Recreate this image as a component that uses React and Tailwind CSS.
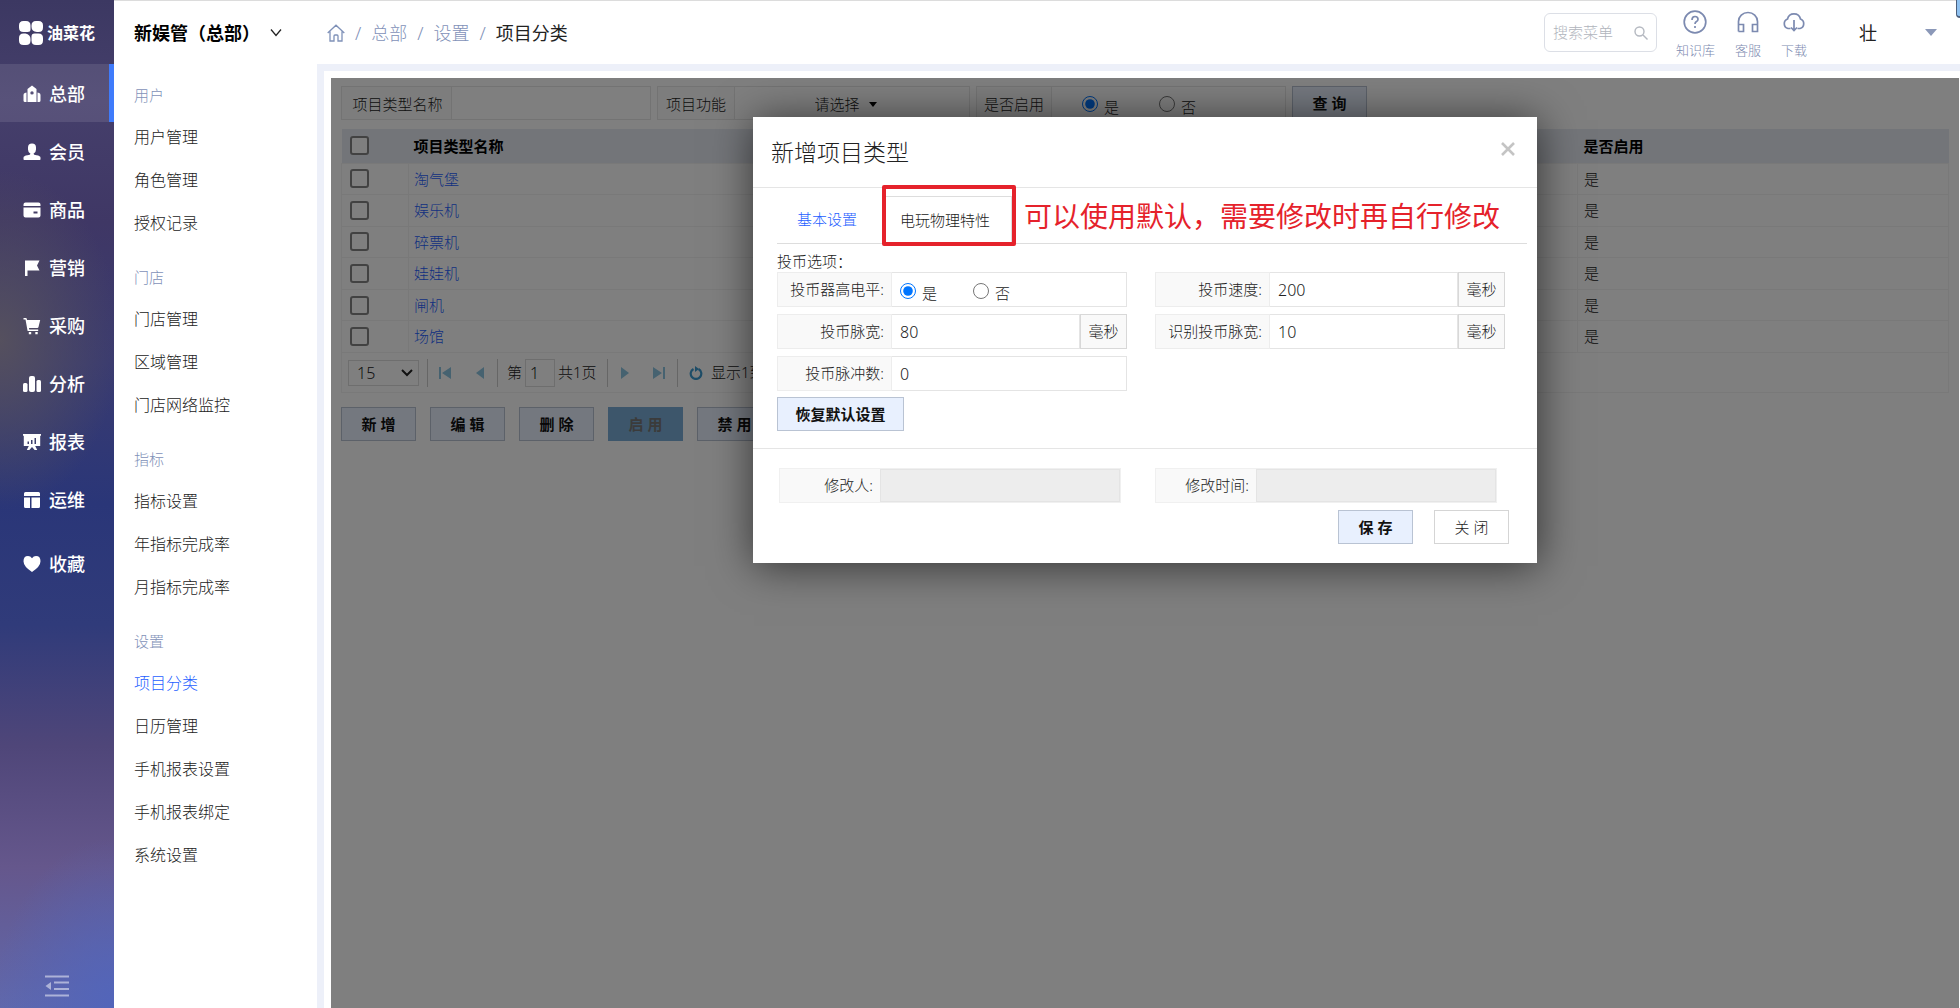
import React, { useState } from 'react';

const mainNav = [
  { name: '总部', icon: 'home' },
  { name: '会员', icon: 'user' },
  { name: '商品', icon: 'card' },
  { name: '营销', icon: 'flag' },
  { name: '采购', icon: 'cart' },
  { name: '分析', icon: 'bars' },
  { name: '报表', icon: 'board' },
  { name: '运维', icon: 'layout' },
];

const groups = [
  { title: '用户', items: ['用户管理', '角色管理', '授权记录'] },
  { title: '门店', items: ['门店管理', '区域管理', '门店网络监控'] },
  { title: '指标', items: ['指标设置', '年指标完成率', '月指标完成率'] },
  { title: '设置', items: ['项目分类', '日历管理', '手机报表设置', '手机报表绑定', '系统设置'] },
];

const rows = ['淘气堡', '娱乐机', '碎票机', '娃娃机', '闸机', '场馆'];

const NavIcon = ({ name }) => (
  <svg viewBox="0 0 18 18" fill="currentColor" className="h-[18px] w-[18px] shrink-0">
    {name === 'home' && (
      <path fillRule="evenodd" d="M9 .5 4.500 4v13h9V4L9 .5ZM9 6.200a1.700 1.700 0 1 1 0 3.400 1.700 1.700 0 0 1 0-3.400ZM3.500 7.500 1.800 8Q.5 8.500.5 10v5.500Q.5 17 2 17h1.500V7.500Zm11 0 1.700.5q1.300.5 1.300 2v5.500q0 1.500-1.500 1.500h-1.500V7.500Z" />
    )}
    {name === 'user' && (
      <path d="M5 4.500Q5 .5 9 .5t4 4v2q0 3-2.500 4.200 0 1 3 1.500 4 .5 4 2.500v1.500q0 .8-.8.8H1.300q-.8 0-.8-.8v-1.500q0-2 4-2.500 3-.5 3-1.500Q5 9.500 5 6.500v-2Z" />
    )}
    {name === 'card' && (
      <path fillRule="evenodd" d="M2.500 1.500h13q2 0 2 2V5H.5V3.500q0-2 2-2ZM.5 6.500h17v8q0 2-2 2h-13q-2 0-2-2v-8Zm10 4v2h4v-2h-4Z" />
    )}
    {name === 'flag' && <path d="M2 1.500h14.500L14 6.500l2.500 5H4.500V17H2V1.500Z" />}
    {name === 'cart' && (
      <path d="M.5 1h2.300q.8 0 1 .8L4 3h13.200L15.500 10q-.2 1-1.200 1H6l.2 1.500h9V14H5.200q-.6 0-.7-.6L2.500 2.500h-2V1Zm5.300 14h2.400v2.300H5.800V15Zm6.500 0h2.400v2.300h-2.400V15Z" />
    )}
    {name === 'bars' && (
      <>
        <rect x="0" y="8" width="4.500" height="9" rx="1.500" />
        <rect x="6" y="1" width="6" height="16" rx="2" />
        <rect x="13.500" y="5" width="4.500" height="12" rx="1.500" />
      </>
    )}
    {name === 'board' && (
      <path fillRule="evenodd" d="M0 1h18v1.800h-.8V13h-5l2 4h-2.500L9 14l-2.700 3H3.800l2-4h-5V2.800H0V1Zm4.500 7.500V11H6V8.500H4.500ZM8 7v4h1.500V7H8Zm3.500-2v6H13V5h-1.500Z" />
    )}
    {name === 'layout' && (
      <path d="M2.500 1h13q1.500 0 1.500 1.500V5H1V2.500Q1 1 2.500 1ZM1 6.500h6V17H2.500Q1 17 1 15.500v-9Zm7.500 0H17v9q0 1.500-1.500 1.500h-7V6.500Z" />
    )}
    {name === 'heart' && (
      <path d="M9 17Q.5 11.500.5 6.300.5 1 5 1q2.500 0 4 2.300Q10.500 1 13 1q4.500 0 4.500 5.300Q17.500 11.500 9 17Z" />
    )}
  </svg>
);

const Logo = () => (
  <div className="flex h-16 items-center gap-1 pl-[19px] pt-[2px]">
    <svg viewBox="0 0 24 24" fill="#fff" className="h-6 w-6">
      <path d="M4.500 0H7q4.500 0 4.500 4.500v4q0 2.500-3 2.500h-4Q0 11 0 6.500v-2Q0 0 4.500 0ZM17 0h2.500Q24 0 24 4.500v2q0 4.500-4.500 4.500H18q-5.500-.5-5.500-5V4.500Q12.500 0 17 0ZM4.500 12.500h2q5 1 5 5.500v1.500q0 4.500-4.500 4.500H4.500Q0 24 0 19.500V17q0-4.500 4.500-4.500ZM15.500 12.500h4Q24 12.500 24 17v2.500q0 4.500-4.500 4.500H17q-4.500 0-4.500-4.500v-4q0-3 3-3Z" />
    </svg>
    <span className="text-base font-bold text-white">油菜花</span>
  </div>
);

const Sidebar = () => (
  <aside className="flex w-[114px] shrink-0 flex-col bg-[radial-gradient(120px_170px_at_100%_100%,#5265ba_0%,transparent_100%),radial-gradient(120px_170px_at_0px_340px,#55505e_0%,transparent_100%),linear-gradient(to_bottom,#3c3862_0%,#453f6b_10%,#3f3765_22%,#3a3b70_36%,#2a3678_50%,#303b7a_62%,#4f4679_74%,#65578c_86%,#6068ac_100%)] text-white">
    <Logo />
    <nav className="flex flex-col">
      {mainNav.map((item, i) => (
        <a
          key={item.name}
          href="#"
          className={`flex h-[58px] items-center gap-2 pl-[23px] pt-[2px] text-lg font-medium ${
            i === 0 ? 'border-r-[5px] border-[#3f7bfb] bg-white/10' : ''
          }`}
        >
          <NavIcon name={item.icon} />
          {item.name}
        </a>
      ))}
      <a href="#" className="mt-[6px] flex h-[58px] items-center gap-2 pl-[23px] pt-[2px] text-lg font-medium">
        <NavIcon name="heart" />
        收藏
      </a>
    </nav>
    <button aria-label="收起" className="mb-[11px] mt-auto self-center">
      <svg viewBox="0 0 24 22" className="h-[22px] w-6 text-white/50" stroke="currentColor" strokeWidth="2" fill="currentColor">
        <path d="M0 1.500h24M9 7.500h15M9 14h15M0 20.500h24" />
        <path stroke="none" d="M6 7v8l-5.500-4L6 7Z" />
      </svg>
    </button>
  </aside>
);

const SubMenu = () => (
  <nav className="w-[203px] shrink-0 pt-3">
    {groups.map((g) => (
      <div key={g.title} className="mb-[14px] pl-5">
        <h2 className="flex h-[39px] items-center text-[15px] text-[#7f91b8]">{g.title}</h2>
        {g.items.map((item) => (
          <a
            key={item}
            href="#"
            className={`flex h-[43px] items-center text-base ${
              item === '项目分类' ? 'text-[#1f5fff]' : 'text-[#222]'
            }`}
          >
            {item}
          </a>
        ))}
      </div>
    ))}
  </nav>
);

const HeaderLink = ({ label, children }) => (
  <a href="#" className="flex flex-col items-center gap-[6px] pt-[5px] text-[13px] leading-5 text-[#7c8ab0]">
    <svg viewBox="0 0 24 24" fill="none" stroke="currentColor" strokeWidth="1.700" className="h-6 w-6">
      {children}
    </svg>
    {label}
  </a>
);

const Header = () => (
  <header className="flex h-16 items-center border-t border-[#dcdcdc] pl-5 text-lg">
    <button className="flex w-[193px] items-center font-bold text-black">
      新娱管（总部）
      <svg viewBox="0 0 12 10" className="ml-[10px] h-[10px] w-3" fill="none" stroke="#222" strokeWidth="1.300">
        <path d="m1 1.500 5 6 5-6" />
      </svg>
    </button>
    <div className="flex items-center gap-[10px] text-[#7f91b8]">
      <svg viewBox="0 0 18 18" className="h-[18px] w-[18px]" fill="none" stroke="currentColor" strokeWidth="1.300">
        <path d="M.7 9 9 1.200 17.300 9M3 7.500V17h4v-5q0-1 1-1h2q1 0 1 1v5h4V7.500" />
      </svg>
      <span>/</span>
      <a href="#">总部</a>
      <span>/</span>
      <a href="#">设置</a>
      <span>/</span>
      <span className="font-normal text-[#222]">项目分类</span>
    </div>
    <div className="ml-auto flex items-center">
      <label className="flex h-[39px] w-[113px] items-center rounded-md border border-[#dcdfe6] pl-2 pr-2">
        <input
          aria-label="搜索菜单"
          placeholder="搜索菜单"
          className="w-0 flex-1 text-[15px] outline-none placeholder:text-[#b0b4bc]"
        />
        <svg viewBox="0 0 14 14" className="h-[14px] w-[14px]" fill="none" stroke="#b4b8c0" strokeWidth="1.400">
          <circle cx="5.500" cy="5.500" r="4.500" />
          <path d="m9 9 4.500 4.500" />
        </svg>
      </label>
      <div className="ml-[19px] flex gap-5">
        <HeaderLink label="知识库">
          <circle cx="12" cy="12" r="10.800" />
          <path d="M9 10q0-3.500 3-3.500t3 2.700q0 1.500-1.500 2.300-1.500.8-1.500 2.500" />
          <path d="M12 16v2" />
        </HeaderLink>
        <HeaderLink label="客服">
          <path d="M2.500 21.500v-10a9.500 9 0 0 1 19 0v10h-5v-7h5M2.500 14.500h5v7h-5" />
        </HeaderLink>
        <HeaderLink label="下载">
          <path d="M8.500 18.500H6A5 5 0 0 1 5.500 9 6.700 6.700 0 0 1 18.500 9a5 5 0 0 1-.5 9.500h-2.500" />
          <path d="M12 10v10.500M9 17.500l3 3 3-3" />
        </HeaderLink>
      </div>
      <button className="ml-[52px] flex items-center gap-12 pr-[23px] font-normal text-[#222]">
        壮
        <svg viewBox="0 0 12 7" className="h-[7px] w-3" fill="#8b98b8">
          <path d="M0 0h12L6 7Z" />
        </svg>
      </button>
    </div>
  </header>
);

const ActionButton = ({ children, className = 'w-[75px]' }) => (
  <button
    className={`h-[34px] shrink-0 border border-[#b9c3d3] bg-[#e8f0fe] text-[15px] font-bold text-[#111] ${className}`}
  >
    {children}
  </button>
);

const YesNo = ({ name, value, onChange, className }) => (
  <div className={`flex items-center ${className}`}>
    {['是', '否'].map((v) => (
      <label key={v} className="flex items-center gap-[6px]">
        <input
          type="radio"
          name={name}
          checked={value === v}
          onChange={() => onChange(v)}
          className="h-4 w-4 accent-[#0075ff]"
        />
        <span className="pt-[6px]">{v}</span>
      </label>
    ))}
  </div>
);

const FilterBar = () => {
  const [enabled, setEnabled] = useState('是');
  const cell = 'flex items-center border border-[#e6e6e6] bg-[#fafafa] pt-[2px]';
  return (
    <div className="flex h-[34px] gap-[6px] text-[15px] text-[#222]">
      <label className="flex w-[310px]">
        <span className={`w-[111px] justify-center pl-[2px] ${cell}`}>项目类型名称</span>
        <input className="w-0 flex-1 border border-l-0 border-[#e6e6e6] bg-white" />
      </label>
      <label className="flex w-[313px]">
        <span className={`w-[78px] justify-center ${cell}`}>项目功能</span>
        <span className="flex flex-1 items-center justify-center gap-2 border border-l-0 border-[#e6e6e6] pr-[13px] pt-[2px]">
          <select className="appearance-none bg-transparent">
            <option>请选择</option>
          </select>
          <svg viewBox="0 0 10 6" className="h-[5px] w-2">
            <path d="M0 0h10L5 6Z" />
          </svg>
        </span>
      </label>
      <div className="flex w-[310px]">
        <span className={`w-[76px] justify-center ${cell}`}>是否启用</span>
        <YesNo
          name="filter"
          value={enabled}
          onChange={setEnabled}
          className="flex-1 gap-10 border border-l-0 border-[#e6e6e6] pl-[30px] pt-[2px]"
        />
      </div>
      <ActionButton>查 询</ActionButton>
    </div>
  );
};

const Check = ({ label }) => (
  <input
    type="checkbox"
    aria-label={label}
    className="block h-[19px] w-[19px] appearance-none rounded-[3px] border-2 border-[#858585] bg-white"
  />
);

const DataTable = () => (
  <table className="mt-[9px] h-[224px] w-full table-fixed border-collapse text-left text-[15px] text-[#222]">
    <thead>
      <tr className="h-[34px] bg-[#e6ebf3] text-black">
        <th className="w-[67px] pl-2">
          <Check label="全选" />
        </th>
        <th className="pl-[5px]">项目类型名称</th>
        <th className="w-[371px] pl-[6px]">是否启用</th>
      </tr>
    </thead>
    <tbody>
      {rows.map((name) => (
        <tr key={name}>
          <td className="border border-[#f2f2f2] p-0 pl-2">
            <Check label={name} />
          </td>
          <td className="border border-[#f2f2f2] p-0 pl-[5px]">
            <a href="#" className="text-[#1f5fff]">{name}</a>
          </td>
          <td className="border border-[#f2f2f2] p-0 pl-[6px]">是</td>
        </tr>
      ))}
    </tbody>
  </table>
);

const PageButton = ({ label, d }) => (
  <button aria-label={label} className="flex h-7 w-[34px] items-center justify-center">
    <svg viewBox="0 0 12 12" className="h-3 w-3" fill="#8cc4e0">
      <path d={d} />
    </svg>
  </button>
);

const Pager = () => (
  <div className="flex h-10 items-center border border-t-0 border-[#f2f2f2] pl-[6px] text-[15px] text-[#222]">
    <div className="relative">
      <select aria-label="每页条数" className="h-[26px] w-[71px] appearance-none border border-[#ddd] bg-white pl-2 text-base">
        <option>15</option>
      </select>
      <svg viewBox="0 0 12 8" className="absolute right-[6px] top-[9px] h-2 w-3" fill="none" stroke="#222" strokeWidth="2">
        <path d="m1 1 5 5 5-5" />
      </svg>
    </div>
    <div className="ml-2 flex h-7 w-[71px] border-x border-[#ccc]">
      <PageButton label="首页" d="M0 0h2v12H0ZM12 0v12L3 6Z" />
      <PageButton label="上一页" d="M11 0v12L3 6Z" />
    </div>
    <label className="flex h-7 w-[109px] items-center pl-[9px]">
      第
      <input defaultValue="1" className="mx-[3px] h-7 w-[30px] border border-[#ddd] bg-white pl-1 text-base" />
      共1页
    </label>
    <div className="flex h-7 w-[71px] border-x border-[#ccc]">
      <PageButton label="下一页" d="M2 0v12l8-6Z" />
      <PageButton label="末页" d="M0 0v12l9-6ZM10 0h2v12h-2Z" />
    </div>
    <button aria-label="刷新" className="ml-[11px] mr-2">
      <svg viewBox="0 0 14 14" className="h-[14px] w-[14px]" fill="none" stroke="#3c9bd0" strokeWidth="2.200">
        <path d="M4.500 3A5.300 5.300 0 1 0 9.500 3" />
        <path d="M6 0v6l4-3Z" fill="#3c9bd0" stroke="none" />
      </svg>
    </button>
    显示1到
  </div>
);

const Field = ({ label, value, unit }) => (
  <label className="flex h-[35px]">
    <span className="flex w-[115px] items-center justify-end border border-[#ededed] bg-[#f9f9f9] pr-[7px]">{label}</span>
    <input defaultValue={value} className="w-0 flex-1 border border-l-0 border-[#e4e4e4] pl-2 text-base" />
    {unit && (
      <span className="flex w-[47px] items-center justify-center border border-[#d8d8d8] bg-[#f9f9f9]">{unit}</span>
    )}
  </label>
);

const ReadOnly = ({ label }) => (
  <label className="flex h-[35px] w-[342px] border border-[#f0f0f0] bg-[#f9f9f9]">
    <span className="flex w-[100px] items-center justify-end pr-[7px]">{label}</span>
    <input disabled className="w-0 flex-1 border border-[#e4e4e4] bg-[#ededed]" />
  </label>
);

const Modal = () => {
  const [level, setLevel] = useState('是');
  return (
    <section
      role="dialog"
      aria-label="新增项目类型"
      className="absolute left-1/2 top-[39px] w-[784px] -translate-x-1/2 bg-white text-[15px] text-[#222] shadow-[1px_3px_40px_rgba(0,0,0,0.6)]"
    >
      <div className="flex h-[71px] items-center justify-between border-b border-[#e5e5e5] pl-[18px] pr-[22px]">
        <h1 className="text-[23px]">新增项目类型</h1>
        <button aria-label="关闭窗口" className="mb-[6px]">
          <svg viewBox="0 0 14 14" className="h-[14px] w-[14px]" stroke="#c4c4c4" strokeWidth="2.600">
            <path d="m1 1 12 12M13 1 1 13" />
          </svg>
        </button>
      </div>

      <div className="pb-[17px] pl-6 pr-[10px]">
        <div className="flex h-14 items-end border-b border-[#ddd]">
          <button className="h-[47px] w-[108px] pl-5 text-left text-[#1f5fff]">基本设置</button>
          <div className="relative">
            <button className="h-[47px] w-[127px] border border-b-0 border-[#ddd] pl-[14px] text-left">电玩物理特性</button>
            <div className="pointer-events-none absolute -bottom-[3px] -left-[3px] h-[61px] w-[134px] rounded-[2px] border-4 border-[#e5222b]" />
          </div>
          <span className="flex h-[54px] items-center whitespace-nowrap pl-3 text-[28px] font-normal text-[#e5222b]">
            可以使用默认，需要修改时再自行修改
          </span>
        </div>

        <p className="h-7 pt-[6px] leading-[22px]">投币选项：</p>
        <div className="grid grid-cols-[350px_350px] gap-x-7 gap-y-[7px]">
          <div className="flex h-[35px]">
            <span className="flex w-[115px] items-center justify-end border border-[#ededed] bg-[#f9f9f9] pr-[7px]">投币器高电平:</span>
            <YesNo
              name="level"
              value={level}
              onChange={setLevel}
              className="flex-1 gap-9 border border-l-0 border-[#e4e4e4] pl-2 pt-[2px]"
            />
          </div>
          <Field label="投币速度:" value="200" unit="毫秒" />
          <Field label="投币脉宽:" value="80" unit="毫秒" />
          <Field label="识别投币脉宽:" value="10" unit="毫秒" />
          <Field label="投币脉冲数:" value="0" />
        </div>
        <ActionButton className="mt-[6px] w-[127px]">恢复默认设置</ActionButton>
      </div>

      <div className="border-t border-[#e5e5e5] pb-[19px] pl-[26px] pr-7 pt-[19px]">
        <div className="flex gap-[34px]">
          <ReadOnly label="修改人:" />
          <ReadOnly label="修改时间:" />
        </div>
        <div className="mt-[7px] flex justify-end gap-[21px]">
          <ActionButton>保 存</ActionButton>
          <button className="h-[34px] w-[75px] border border-[#d5d5d5] bg-white">关 闭</button>
        </div>
      </div>
    </section>
  );
};

const App = () => (
  <div className="flex min-h-screen bg-white font-['Noto_Sans','Noto_Sans_CJK_SC',sans-serif] font-light">
    <Sidebar />
    <div className="relative flex min-w-0 flex-1 flex-col">
      <Header />
      <div className="absolute right-0 top-0 h-[18px] w-1 rounded-bl border-b-2 border-l border-[#4b5f7c] bg-[#8fc1f0]" />
      <div className="flex min-h-0 flex-1">
        <SubMenu />
        <main className="flex min-w-0 flex-1 border-l-[7px] border-t-[7px] border-[#edf0f9] pl-[7px] pr-px pt-[7px]">
          <div className="relative min-w-0 flex-1 overflow-hidden px-[10px] pt-2">
            <FilterBar />
            <DataTable />
            <Pager />
            <div className="mt-[14px] flex gap-[14px]">
              <ActionButton>新 增</ActionButton>
              <ActionButton>编 辑</ActionButton>
              <ActionButton>删 除</ActionButton>
              <button disabled className="h-[34px] w-[75px] bg-[#7aacd6] text-[15px] font-bold text-[#777]">启 用</button>
              <ActionButton>禁 用</ActionButton>
            </div>
            <div className="absolute inset-0 bg-black/50" />
            <Modal />
          </div>
        </main>
      </div>
    </div>
  </div>
);

export default App;
